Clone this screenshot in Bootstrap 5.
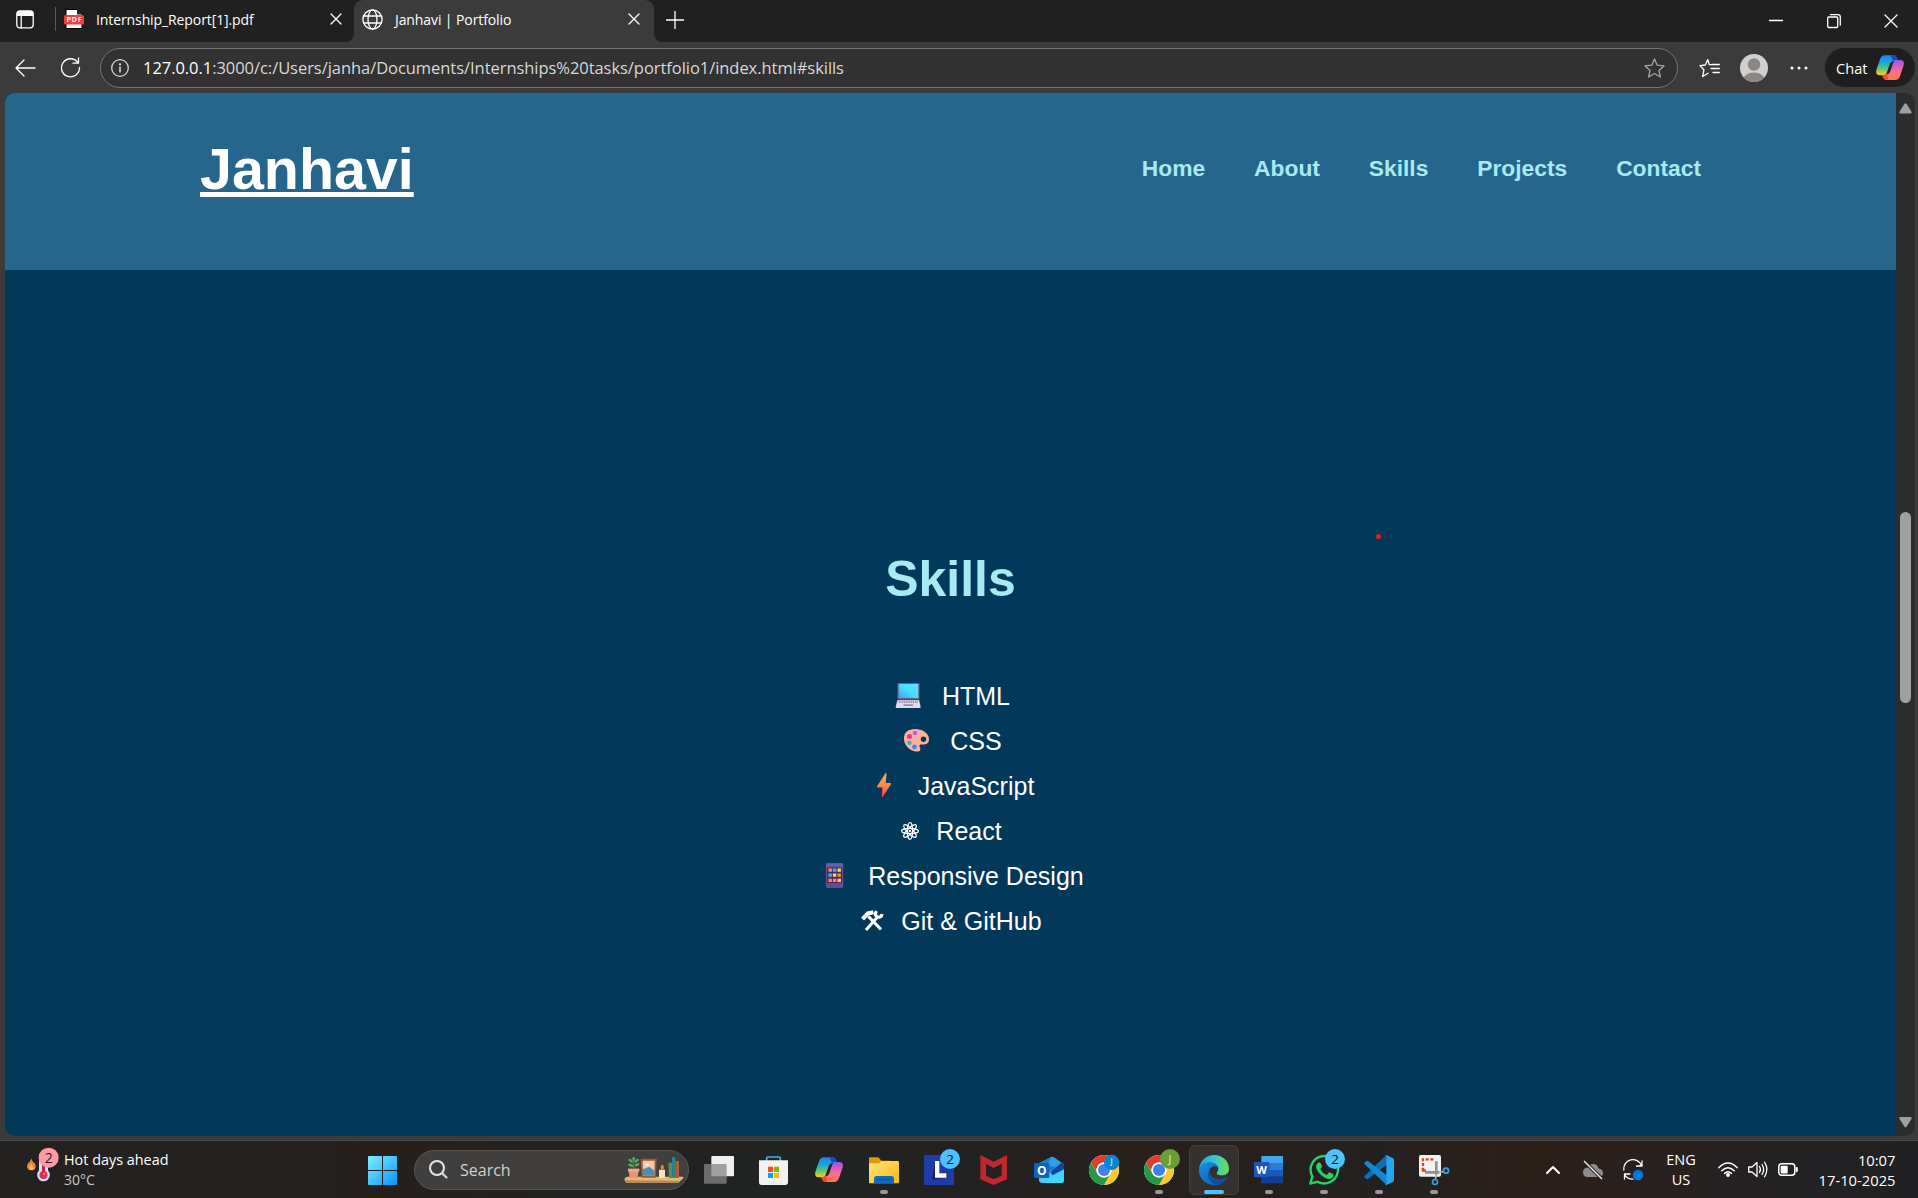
<!DOCTYPE html>
<html lang="en">
<head>
<meta charset="utf-8">
<title>Janhavi | Portfolio</title>
<link href="https://cdn.jsdelivr.net/npm/bootstrap@5.3.0/dist/css/bootstrap.min.css" rel="stylesheet">
<style>
html,body{height:100%;overflow:hidden}
body{background:#3b3b3b;color:#fff;font-family:"Open Sans","Noto Sans",sans-serif;font-size:15px;line-height:20px}
svg{display:block;overflow:visible;flex:none}
.ln{fill:none;stroke:#fff;stroke-width:1.3;stroke-linecap:round;stroke-linejoin:round}
.tabstrip{height:42px;background:#202020}
.tab-title{font-size:14px;white-space:nowrap;padding-top:1px}
.title-gap{margin-left:12px;letter-spacing:-.1px}
.slot-workspace{width:50px;padding-left:16px}
.tab-divider{width:1px;height:24px;background:#5a5a5a;margin-left:5px}
.tab-idle{width:298px;padding:0 12px 0 8px}
.tab-open{width:300px;height:42px;background:#3b3b3b;border-radius:9px 9px 0 0;position:relative;padding:0 14px 0 8px}
.tab-open::before,.tab-open::after{content:"";position:absolute;bottom:0;width:8px;height:8px}
.tab-open::before{left:-8px;background:radial-gradient(circle at 0 0,#202020 7.5px,#3b3b3b 8px)}
.tab-open::after{right:-8px;background:radial-gradient(circle at 100% 0,#202020 7.5px,#3b3b3b 8px)}
.slot-new{width:42px;padding-top:11px}
.slot-win{width:57.5px}
.win-group{margin-right:-2px}
.toolbar-row{height:51px}
.slot-back{width:50px}.slot-reload{width:40px}
.omnibox{width:1578px;height:40px;border:1px solid #757575;border-radius:20px;background:#323232;margin-left:10px;padding:0 12px 0 10px}
.url-text{font-size:16.5px;letter-spacing:-.05px;color:#d8d8d8;white-space:nowrap;margin-left:14px}
.url-text b{font-weight:400;color:#fff}
.tool-group{padding-right:3px}
.fav-ico{margin-right:20px}
.dots-ico{margin:0 17px 0 22px}
.chat-pill{width:90px;height:39px;border-radius:20px;background:#1f1f1f;padding-left:11px;gap:3px}
.chat-label{font-size:14.6px;width:31px}
.viewport-row{height:1043px;padding-left:5px;padding-right:3px}
.site{width:1891px;background:#023859;border-radius:10px 0 0 10px;overflow:hidden;font-family:"Liberation Sans",Arial,sans-serif}
.site-head{height:177px;background:#26658c;padding:0 195px}
.brand-name{font-size:57.4px;line-height:66px;font-weight:700;margin:43px 0 0;text-decoration:underline}
.site-nav{gap:48.9px;margin-top:62px;font-size:22.8px;line-height:26px;font-weight:700}
.site-nav a,.skill-title{color:#a7ebf2;text-decoration:none}
.skill-title{font-size:49.9px;line-height:58px;font-weight:700;margin:280px 0 0}
.skill-list{margin:65px 0 0;font-size:25px}
.skill-list li{height:45px}
.ico-wide{width:51px;padding-left:5px}.ico-atom{width:37px;padding-left:1.5px}.ico-tool{width:42px;padding-left:2px}
.pointer-dot{position:absolute;left:1371.4px;top:441px;width:5px;height:5px;border-radius:50%;background:#ed1c24}
.scroller{width:19px;background:#2c2c2c;border-radius:0 10px 10px 0;padding:10px 0 8px}
.scroll-thumb{width:11px;height:191px;border-radius:6px;background:#9f9f9f;margin-top:398px}
.frame-edge{height:5px;border-bottom:1px solid #4a4a4a}
.taskbar{height:57px;background:linear-gradient(90deg,#232220 0,#242120 16%,#261f1c 20%,#212221 30%,#202423 40%,#232121 52%,#27201d 60%,#232120 72%,#2d201b 80%,#29201e 85%,#222123 94%,#212022 100%)}
.weather{width:354.5px;padding:9px 0 0 64px;position:relative}
.weather svg{position:absolute;left:24px;top:4px}
.weather-main{font-size:14.4px}.weather-sub{font-size:14px;color:#c8c8c8}
.cell{width:55px;height:57px;position:relative}
.cell.run::after{content:"";position:absolute;bottom:4px;left:23.5px;width:8px;height:4px;border-radius:2px;background:#9b9896}
.cell.active::before{content:"";position:absolute;left:2.5px;top:4px;width:50px;height:50px;border-radius:6px;background:#353130;border:1px solid #413d3c}
.cell.active::after{left:17.5px;width:20px;background:#4cc2ff}
.cell svg{position:relative;top:.5px}
.search-pill{width:275px;height:40px;margin:0 2.5px 0 4.5px;padding:0 4px 0 14px;border-radius:20px;background:#403f3e;border:1px solid #565554}
.search-label{font-size:16px;color:#d0d0d0;margin:1px 0 0 12px}
.tray{padding-right:22.5px;font-size:14.5px}
.w40{width:40px}.w30{width:30px}.w-lang{width:56px;margin-right:4px;padding-top:1px}.w-clock{width:92.5px;white-space:nowrap;font-size:14.75px}
.svgt{font-family:"Open Sans","Noto Sans",sans-serif}
</style>
<script src="https://cdn.jsdelivr.net/npm/bootstrap@5.3.0/dist/js/bootstrap.bundle.min.js"></script>
</head>
<body>
<svg width="0" height="0" class="position-absolute" aria-hidden="true">
 <defs>
  <linearGradient id="cpA" x1="0" y1="0" x2="0" y2="1"><stop offset="0" stop-color="#2a7cf0"/><stop offset=".35" stop-color="#18a5dc"/><stop offset=".65" stop-color="#5cc478"/><stop offset="1" stop-color="#ffd014"/></linearGradient>
  <linearGradient id="cpB" x1="0" y1="0" x2="0" y2="1"><stop offset="0" stop-color="#ff7a3c"/><stop offset=".4" stop-color="#ff6e8e"/><stop offset="1" stop-color="#a84df0"/></linearGradient>
  <linearGradient id="winG" x1="0" y1="0" x2="1" y2="1"><stop offset="0" stop-color="#7df0ff"/><stop offset="1" stop-color="#0a94ff"/></linearGradient>
  <linearGradient id="lapG" x1="1" y1="0" x2="0" y2="1"><stop offset="0" stop-color="#5fe4ff"/><stop offset=".5" stop-color="#4bdcff"/><stop offset="1" stop-color="#35a5f2"/></linearGradient>
  <linearGradient id="boltG" x1="0" y1="0" x2="0" y2="1"><stop offset="0" stop-color="#fdb44b"/><stop offset=".5" stop-color="#fb8a44"/><stop offset="1" stop-color="#e8395a"/></linearGradient>
  <linearGradient id="fold" x1="0" y1="0" x2="1" y2="1"><stop offset="0" stop-color="#ffe27a"/><stop offset="1" stop-color="#fdb913"/></linearGradient>
  <linearGradient id="edA" x1="0" y1="0" x2="1" y2="0"><stop offset="0" stop-color="#1fa2e0"/><stop offset=".5" stop-color="#34c8d0"/><stop offset="1" stop-color="#6de04c"/></linearGradient>
  <linearGradient id="edB" x1="0" y1="0" x2="1" y2="1"><stop offset="0" stop-color="#1790e0"/><stop offset="1" stop-color="#0a56b0"/></linearGradient>
  <g id="copilot">
   <path fill="url(#cpB)" transform="rotate(180 60 59)" d="M44 22H70Q78 22 81 31L84 41Q67 34 60 46L51 72Q48 82 40 82H30Q15 82 19 66L30 34Q34 22 44 22Z"/>
   <path fill="url(#cpA)" d="M44 22H70Q78 22 81 31L84 41Q67 34 60 46L51 72Q48 82 40 82H30Q15 82 19 66L30 34Q34 22 44 22Z"/>
   <path fill="#1748c8" d="M60 22H70Q78 22 81 31L84 37Q74 35 68 38Q66 28 60 22Z"/>
   <path fill="#f0493a" d="M36 82H40Q47 81 51 76L54 92L50 96Q42 96 39 88Z"/>
  </g>
  <g id="chrome">
   <circle cx="60" cy="60" r="45" fill="#fff"/>
   <path fill="#e33b2e" d="M21 37.500L41 71.500A22 22 0 0 1 60 37.500H99A45 45 0 0 0 21 37.500Z"/>
   <path fill="#fcc934" d="M99 37.500A45 45 0 0 1 60 105L79.500 71A22 22 0 0 0 60 37.500Z"/>
   <path fill="#279847" d="M60 105A45 45 0 0 1 21 37.500L41 71A22 22 0 0 0 79.500 71Z"/>
   <circle cx="60" cy="60" r="22.500" fill="#fff"/><circle cx="60" cy="60" r="18" fill="#3f7ff0"/>
  </g>
 </defs>
</svg>

<div class="d-flex flex-column vh-100">
 <!-- Tab strip -->
 <div class="tabstrip d-flex align-items-start">
  <div class="d-flex align-items-center h-100 pb-1">
   <div class="slot-workspace"><svg width="18" height="19" viewBox="0 0 18 19"><rect x=".8" y=".8" width="16.400" height="17" rx="3" class="ln"/><path fill="#fff" d="M1 1H17V6H1Z"/><path class="ln" d="M5.200 5V18"/></svg></div>
   <div class="tab-divider"></div>
   <div class="tab-idle d-flex align-items-center">
    <svg width="20" height="20" viewBox="0 0 20 20"><path fill="#fff" stroke="#000" d="M2 .5H13L18 5.500V19.500H2Z"/><path fill="#222" d="M13 .5L18 5.500H13Z"/><rect y="6" width="20" height="9.500" rx="1.500" fill="#f0403c"/><text x="2.400" y="13.400" font-size="7.200" font-weight="700" fill="#fff" textLength="15.200" class="svgt">PDF</text></svg>
    <span class="tab-title title-gap">Internship_Report[1].pdf</span>
    <svg class="ms-auto" width="12" height="12" viewBox="0 0 12 12"><path class="ln" d="M1 1L11 11M11 1L1 11"/></svg>
   </div>
  </div>
  <div class="tab-open d-flex align-items-center pb-1">
   <svg width="21" height="21" viewBox="0 0 21 21"><g class="ln"><circle cx="10.500" cy="10.500" r="9.600"/><ellipse cx="10.500" cy="10.500" rx="4.500" ry="9.600"/><path d="M1.800 7H19.200M1.800 14H19.200"/></g></svg>
   <span class="tab-title title-gap">Janhavi | Portfolio</span>
   <svg class="ms-auto" width="12" height="12" viewBox="0 0 12 12"><path class="ln" d="M1 1L11 11M11 1L1 11"/></svg>
  </div>
  <div class="slot-new d-flex justify-content-center"><svg width="18" height="18" viewBox="0 0 18 18"><path class="ln" d="M9 .5V17.500M.5 9H17.500"/></svg></div>
  <div class="win-group ms-auto d-flex align-items-center h-100">
   <div class="slot-win d-flex justify-content-center"><svg width="14" height="14"><path class="ln" d="M.5 6.500H13.500"/></svg></div>
   <div class="slot-win d-flex justify-content-center"><svg width="14" height="14" viewBox="0 0 14 14"><rect x=".7" y="3" width="10" height="10.500" rx="1" class="ln"/><path class="ln" d="M3.500 .7H11Q13.300 .7 13.300 3V11"/></svg></div>
   <div class="slot-win d-flex justify-content-center"><svg width="14" height="14" viewBox="0 0 14 14"><path class="ln" d="M1 1L13 13M13 1L1 13"/></svg></div>
  </div>
 </div>

 <!-- Address row -->
 <div class="toolbar-row d-flex align-items-center">
  <div class="slot-back d-flex justify-content-center"><svg width="21" height="18" viewBox="0 0 21 18"><path class="ln" d="M20 9H1M9 1L1 9L9 17"/></svg></div>
  <div class="slot-reload d-flex justify-content-center"><svg width="21" height="21" viewBox="0 0 21 21"><path class="ln" d="M17.800 5.500A9 9 0 1 0 19.500 10.500M18.500 1V6.200H13"/></svg></div>
  <div class="omnibox d-flex align-items-center">
   <svg width="18" height="18" viewBox="0 0 18 18"><circle cx="9" cy="9" r="8.300" class="ln" stroke-opacity=".8"/><path class="ln" d="M9 8V13"/><circle cx="9" cy="5.300" r="1" fill="#fff"/></svg>
   <span class="url-text"><b>127.0.0.1</b>:3000/c:/Users/janha/Documents/Internships%20tasks/portfolio1/index.html#skills</span>
   <svg class="ms-auto" width="21" height="20" viewBox="0 0 21 20"><path fill="none" stroke="#a5a5a5" stroke-width="1.300" stroke-linejoin="round" d="M10.500 1L13.200 7.200L20 7.900L14.900 12.400L16.400 19L10.500 15.500L4.600 19L6.100 12.400L1 7.900L7.800 7.200Z"/></svg>
  </div>
  <div class="tool-group d-flex align-items-center ms-auto">
   <svg class="fav-ico" width="21" height="20" viewBox="0 0 21 20"><path class="ln" d="M13.500 6.500L10.300 6.700L8.800 1.500L6.300 7L.8 7.600L4.900 11.800L3.700 18.500L9 15.300M13 6.500H20.300M12 10.500H20.300M14 14.500H20.300"/></svg>
   <svg width="28" height="28" viewBox="0 0 28 28"><clipPath id="av"><circle cx="14" cy="14" r="14"/></clipPath><g clip-path="url(#av)"><path fill="#d2d0ce" d="M0 0H28V28H0Z"/><circle cx="14" cy="10.500" r="6.200" fill="#8a8886"/><ellipse cx="14" cy="26" rx="11" ry="7.500" fill="#8a8886"/></g></svg>
   <svg class="dots-ico" width="18" height="4" viewBox="0 0 18 4"><g fill="#fff"><circle cx="2" cy="2" r="1.500"/><circle cx="9" cy="2" r="1.500"/><circle cx="16" cy="2" r="1.500"/></g></svg>
   <div class="chat-pill d-flex align-items-center"><span class="chat-label">Chat</span><svg width="40" height="40" viewBox="0 0 120 120"><use href="#copilot"/></svg></div>
  </div>
 </div>

 <!-- Page -->
 <div class="viewport-row d-flex">
  <main class="site position-relative">
   <header class="site-head d-flex justify-content-between align-items-start">
    <h1 class="brand-name">Janhavi</h1>
    <nav class="site-nav d-flex"><a href="#home">Home</a><a href="#about">About</a><a href="#skills">Skills</a><a href="#projects">Projects</a><a href="#contact">Contact</a></nav>
   </header>
   <section class="text-center">
    <h2 class="skill-title">Skills</h2>
    <ul class="skill-list list-unstyled">
     <li class="d-flex justify-content-center align-items-center"><span class="ico-wide"><svg width="24" height="25" viewBox="0 0 24 25"><rect x="1.500" width="22" height="16.500" rx="1" fill="#6a5f8c"/><rect x="2.700" y="1" width="19.600" height="14" fill="url(#lapG)"/><path fill="#e3d9e8" d="M1.500 17H23L24.500 23V25H-.2V23Z"/><path stroke="#9d93ab" stroke-width="2.400" stroke-dasharray="1.200 .6" d="M2.500 18.800H22"/><path fill="#968ca5" d="M7.500 21.300H17V23H7.500Z"/></svg></span><span>HTML</span></li>
     <li class="d-flex justify-content-center align-items-center"><span class="ico-wide"><svg width="25" height="23" viewBox="0 0 25 23"><path fill="#ffb1a0" fill-rule="evenodd" d="M11 0C18 0 25 4 25 10C25 15 21 16 17 15.500C15 15.500 15 17 16 18.500C17 21 16 23 12 22.500C5 21.500 0 16 0 9.500C0 3.500 4 0 11 0ZM19.500 7.500A2.700 2.700 0 1 0 19.500 12.900A2.700 2.700 0 1 0 19.500 7.500Z"/><circle cx="5.500" cy="7.500" r="2.500" fill="#f0318c"/><circle cx="11" cy="4" r="2.200" fill="#c05cf0"/><circle cx="5.500" cy="13.800" r="2.200" fill="#32b5b5"/><circle cx="10.500" cy="18" r="2.400" fill="#4a86e8"/></svg></span><span>CSS</span></li>
     <li class="d-flex justify-content-center align-items-center"><span class="ico-wide"><svg width="24" height="25" viewBox="0 0 24 25"><path fill="url(#boltG)" d="M13.500 .3Q14.500 -.3 14.500 1L13.800 10H18.500Q19.500 10.200 18.800 11.500L10.800 24Q9.800 25 10 23.500L10.300 14.500H5.800Q4.500 14.200 5.200 13Z"/></svg></span><span>JavaScript</span></li>
     <li class="d-flex justify-content-center align-items-center"><span class="ico-atom"><svg width="18" height="18" viewBox="-9 -9 18 18"><g fill="none" stroke="#fff" stroke-width="1.200"><ellipse rx="8.500" ry="2.700"/><ellipse rx="8.500" ry="2.700" transform="rotate(45)"/><ellipse rx="8.500" ry="2.700" transform="rotate(90)"/><ellipse rx="8.500" ry="2.700" transform="rotate(135)"/></g><circle r="1.300" fill="#fff"/></svg></span><span>React</span></li>
     <li class="d-flex justify-content-center align-items-center"><span class="ico-wide"><svg width="24" height="25" viewBox="0 0 24 25"><rect x="3.800" width="17.500" height="25" rx="1.500" fill="#6a4a8e"/><rect x="5" y="4.500" width="15" height="15.500" fill="#4a2d66"/><path fill="#5b63b7" d="M4.500 .5H20.500V3.500H4.500Z"/><g transform="translate(.5 0)"><g fill="#ff8a3d"><path d="M6 5.500h3.400v3.200H6zM6 15.700h3.400v3.200H6zM10.400 15.700h3.400v3.200h-3.400zM15 10.600h3.400v3.200H15z"/></g><g fill="#3fb0f5"><path d="M10.400 5.500h3.400v3.200h-3.400zM6 10.600h3.400v3.200H6z"/></g><g fill="#ffd94d"><path d="M15 5.500h3.400v3.200H15zM10.400 10.600h3.400v3.200h-3.400zM15 15.700h3.400v3.200H15z"/></g></g></svg></span><span>Responsive Design</span></li>
     <li class="d-flex justify-content-center align-items-center"><span class="ico-tool"><svg width="22" height="21" viewBox="0 0 22 21"><g fill="none" stroke="#fff"><path stroke-width="3.200" d="M7.500 6.500L20 19.500"/><path stroke-width="3" d="M5 20L16.500 7"/><path stroke-width="4.200" d="M1.500 9L7 3.500L12.500 2.200"/><path stroke-width="3.200" d="M15.500 1Q13 5.500 16.500 7Q20.500 8 21 4"/></g></svg></span><span>Git &amp; GitHub</span></li>
    </ul>
   </section>
   <span class="pointer-dot"></span>
  </main>
  <div class="scroller d-flex flex-column align-items-center">
   <svg width="13" height="11" viewBox="0 0 13 11"><path fill="#9f9f9f" d="M5.500 .8Q6.500 -.3 7.500 .8L12.700 9Q13 10.500 11.500 10.500H1.500Q0 10.500 .3 9Z"/></svg>
   <div class="scroll-thumb"></div>
   <svg class="mt-auto" width="13" height="11" viewBox="0 0 13 11"><path fill="#9f9f9f" d="M5.500 9.700Q6.500 10.800 7.500 9.700L12.700 1.500Q13 0 11.500 0H1.500Q0 0 .3 1.500Z"/></svg>
  </div>
 </div>
 <div class="frame-edge"></div>

 <!-- Taskbar -->
 <div class="taskbar d-flex align-items-center">
  <div class="weather h-100">
   <svg width="36" height="40" viewBox="0 0 108 120"><path fill="#fb7a35" d="M22 40Q24 50 29 52Q34 56 35 62Q36 76 22 76Q9 76 9 62Q10 54 17 50Q21 46 22 40Z"/><path fill="#ffc34d" d="M22 56Q30 64 29 70Q27 75 22 75Q16 74 16 68Q17 62 22 56Z"/><rect x="45" y="20" width="27" height="78" rx="13" fill="#c9e4f8"/><circle cx="58.500" cy="90" r="19" fill="#c9e4f8"/><path stroke="#c8234a" stroke-width="9" d="M58.500 40V90"/><circle cx="58.500" cy="90" r="12" fill="#e02c50"/><circle cx="61" cy="87" r="3" fill="#ff8b9b"/><circle cx="74" cy="38" r="30" fill="#ff99a4"/><text x="74" y="53" font-size="42" fill="#222" text-anchor="middle" class="svgt">2</text></svg>
   <div class="weather-main">Hot days ahead</div><div class="weather-sub">30°C</div>
  </div>
  <div class="cell d-flex align-items-center justify-content-center"><svg width="29" height="29" viewBox="0 0 29 29"><path fill="url(#winG)" d="M1 0H14V14H0V1Q0 0 1 0ZM15 0H28Q29 0 29 1V14H15ZM0 15H14V29H1Q0 29 0 28ZM15 15H29V28Q29 29 28 29H15Z"/></svg></div>
  <div class="search-pill d-flex align-items-center">
   <svg width="19" height="19" viewBox="0 0 19 19"><circle cx="8" cy="8" r="7" fill="none" stroke="#e3e8ee" stroke-width="2"/><path stroke="#d5dae0" stroke-width="2.200" stroke-linecap="round" d="M13 13L17.500 17.500"/></svg>
   <span class="search-label">Search</span>
   <svg class="ms-auto" width="60" height="28" viewBox="820 82 180 84"><path fill="#e3b878" d="M822 148L830 144H996L999 147L986 160Q984 162 980 162H828Q822 160 822 155Z"/><path fill="#b98850" d="M822 155L988 156L984 162H828Q822 160 822 155Z"/><path fill="#e8937a" d="M833 122H865L861 148H837Z"/><path fill="#f5ab93" d="M832 120H866V128H832Z"/><path stroke="#3a9a48" stroke-width="3" d="M849 122V92"/><g fill="#48b055"><ellipse cx="840" cy="96" rx="8" ry="4" transform="rotate(35 840 96)"/><ellipse cx="858" cy="96" rx="8" ry="4" transform="rotate(-35 858 96)"/><ellipse cx="840" cy="110" rx="8" ry="4" transform="rotate(25 840 110)"/><ellipse cx="859" cy="108" rx="8" ry="4" transform="rotate(-25 859 108)"/><ellipse cx="849" cy="90" rx="4" ry="6"/></g><path fill="#9c5a30" d="M870 90H918L916 147H872Z"/><path fill="#f2c8a8" d="M876 96H912L911 141H877Z"/><path fill="#4f8db5" d="M877 122L896 114L911 126V141H877Z"/><circle cx="890" cy="108" r="5" fill="#fff0d8"/><rect x="925" y="123" width="18" height="25" fill="#f5e3c0"/><path fill="#ff8a28" d="M935 107Q943 118 937 122H932Q927 117 935 107Z"/><path fill="#5e8a4c" d="M953 102H964V148H955Z"/><path fill="#1f8a94" d="M964 86H974V148H965Z"/><path fill="#b55b35" d="M974 97H985V148H974Z"/></svg>
  </div>
  <div class="cell d-flex align-items-center justify-content-center"><svg width="40" height="40" viewBox="0 0 120 120"><rect x="37" y="18" width="68" height="61" rx="3" fill="#f0f0f0"/><rect x="15" y="42" width="68" height="59" rx="3" fill="#858585" fill-opacity=".75"/></svg></div>
  <div class="cell d-flex align-items-center justify-content-center"><svg width="40" height="40" viewBox="0 0 120 120"><path fill="none" stroke="#35b8ee" stroke-width="5" d="M38 34V24Q38 21 41 21H76Q79 21 79 24V34"/><path fill="#f2f2f2" d="M15 31H102V97Q102 105 94 105H23Q15 105 15 97Z"/><path fill="#f25022" d="M42 50H57V66H42Z"/><path fill="#7fba00" d="M60 50H75V66H60Z"/><path fill="#00a4ef" d="M42 69H57V84H42Z"/><path fill="#ffb900" d="M60 69H75V84H60Z"/></svg></div>
  <div class="cell d-flex align-items-center justify-content-center"><svg width="40" height="40" viewBox="0 0 120 120"><use href="#copilot"/></svg></div>
  <div class="cell run d-flex align-items-center justify-content-center"><svg width="40" height="40" viewBox="0 0 120 120"><path fill="#dd9b06" d="M15 25Q15 22 19 22H40Q44 22 47 26L52 32H80V50H15Z"/><path fill="url(#fold)" d="M15 40H42Q46 40 49 36L52 33H101Q105 33 105 37V96Q105 100 101 100H15Z"/><path fill="#0f6cbd" d="M30 100V86Q30 78 38 78H82Q90 78 90 86V100Z"/><path stroke="#0a4f94" stroke-width="3" d="M40 89H80"/></svg></div>
  <div class="cell d-flex align-items-center justify-content-center"><svg width="40" height="40" viewBox="0 0 120 120"><path fill="#1f3ba8" d="M15 15H105V105H15Z"/><path fill="#132352" d="M48 33L40 89L82 83V70H60Z"/><path fill="#fff" d="M48 33H61V70H82V83H48Z"/><circle cx="93" cy="27" r="30" fill="#4cc2ff"/><text x="93" y="41" font-size="40" fill="#111" text-anchor="middle" class="svgt">2</text></svg></div>
  <div class="cell d-flex align-items-center justify-content-center"><svg width="40" height="40" viewBox="0 0 120 120"><path fill="#c1272d" d="M19 15L59 35L99 15V88L59 105L19 88ZM36 41V77L59 88L83 77V41L59 54Z" fill-rule="evenodd"/></svg></div>
  <div class="cell d-flex align-items-center justify-content-center"><svg width="40" height="40" viewBox="0 0 120 120"><path fill="#2f9fe8" d="M30 40L66 21Q72 19 78 24L104 42L60 72Z"/><path fill="#52c8f2" d="M30 45V92Q32 99 40 99H96Q105 98 105 89V42L60 68Z"/><path fill="#0a4a9c" d="M64 66L100 36L105 44V58L70 76Z"/><path fill="#1a78cf" d="M36 37L66 21Q60 40 50 46L84 52L56 66Z"/><path fill="#3fd6f7" d="M48 95L105 60V89Q104 99 96 99H44Z"/><rect x="15" y="39" width="46" height="45" rx="4" fill="#0c64c0"/><text x="38" y="74" font-size="36" font-weight="700" fill="#fff" text-anchor="middle" class="svgt">O</text></svg></div>
  <div class="cell d-flex align-items-center justify-content-center"><svg width="40" height="40" viewBox="0 0 120 120"><use href="#chrome"/><circle cx="83" cy="37" r="23" fill="#0288d1"/><text x="83" y="46" font-size="25" fill="#fff" text-anchor="middle" class="svgt">J</text></svg></div>
  <div class="cell run d-flex align-items-center justify-content-center"><svg width="40" height="40" viewBox="0 0 120 120"><use href="#chrome"/><circle cx="93" cy="27" r="30" fill="#689f38"/><text x="93" y="38" font-size="32" fill="#e8f0dc" text-anchor="middle" class="svgt">J</text></svg></div>
  <div class="cell run active d-flex align-items-center justify-content-center"><svg width="40" height="40" viewBox="0 0 120 120"><path fill="url(#edA)" d="M15 58C18 30 38 15 60 15C86 15 105 34 105 56C105 70 95 76 84 76C74 76 68 73 68 69C68 66 73 64 73 56C73 44 60 38 48 38C32 38 20 46 15 58Z"/><path fill="url(#edB)" d="M15 60C18 45 30 37 46 37C60 37 72 44 72 55C70 48 58 46 50 54C42 62 46 84 68 88C80 90 90 85 96 82Q100 82 98 86C90 98 76 105 60 105C34 105 14 84 15 60Z"/><path fill="#0d4f9e" d="M50 54C40 66 46 84 62 88C78 91 90 85 96 82Q100 82 98 86C91 96 82 102 68 104C46 100 34 74 50 54Z"/></svg></div>
  <div class="cell run d-flex align-items-center justify-content-center"><svg width="40" height="40" viewBox="0 0 120 120"><path fill="#41a5ee" d="M37 18H102V39H37Z"/><path fill="#2b7cd3" d="M37 39H102V60H37Z"/><path fill="#185abd" d="M37 60H102V80H37Z"/><path fill="#103f91" d="M37 80H102V100H37Z"/><rect x="15" y="36" width="46" height="46" rx="3" fill="#1c56b8"/><text x="38" y="71" font-size="33" font-weight="700" fill="#fff" text-anchor="middle" class="svgt">W</text></svg></div>
  <div class="cell run d-flex align-items-center justify-content-center"><svg width="40" height="40" viewBox="0 0 120 120"><path fill="none" stroke="#25d366" stroke-width="7" stroke-linejoin="round" d="M19 101L25 79A41 41 0 1 1 41 95Z"/><path fill="#25d366" d="M42 38Q47 36 50 40L54 49Q54 52 49 57Q55 70 68 75L74 68Q76 66 79 68L88 73Q90 75 87 81Q82 88 73 87Q58 84 46 70Q34 56 37 45Q39 40 42 38Z"/><circle cx="93" cy="27" r="30" fill="#4cc2ff"/><text x="93" y="41" font-size="40" fill="#111" text-anchor="middle" class="svgt">2</text></svg></div>
  <div class="cell run d-flex align-items-center justify-content-center"><svg width="40" height="40" viewBox="0 0 120 120"><path fill="#0a6fb8" d="M17 77L80 17L86 42L27 87Q24 89 21 86L16 81Q15 79 17 77Z"/><path fill="#1486d2" d="M17 43L80 103L86 78L27 33Q24 31 21 34L16 39Q15 41 17 43Z"/><path fill="#24a5f0" d="M78 16Q81 14 84 16L101 24Q105 26 105 30V90Q105 94 101 96L84 104Q81 106 78 103Q82 103 82 98V22Q82 17 78 16Z"/></svg></div>
  <div class="cell run d-flex align-items-center justify-content-center"><svg width="40" height="40" viewBox="0 0 120 120"><rect x="15" y="15" width="66" height="65" rx="5" fill="#f2f2f2"/><path fill="none" stroke="#d8431a" stroke-width="7" stroke-dasharray="9 5" d="M27 62V28H63"/><path fill="none" stroke="#d8431a" stroke-width="7" d="M27 54V62H36"/><path stroke="#8d9299" stroke-width="8" d="M67 34V74M33 67H76"/><path stroke="#b0b4ba" stroke-width="5" d="M67 74L64 88M76 67L90 64"/><g fill="none" stroke="#2fa3e6" stroke-width="5"><circle cx="63" cy="96" r="7.500"/><circle cx="96" cy="62" r="7.500"/></g></svg></div>

  <div class="tray d-flex align-items-center ms-auto">
   <div class="w40 d-flex justify-content-center"><svg width="14" height="8" viewBox="0 0 14 8"><path fill="none" stroke="#fff" stroke-width="2" stroke-linecap="round" stroke-linejoin="round" d="M1 7L7 1L13 7"/></svg></div>
   <div class="w40 d-flex justify-content-center"><svg width="20" height="18" viewBox="0 0 20 18"><path fill="#8f8c8b" d="M5 16Q0 16 0 11.500Q0 7 4.500 6.800Q6 3 10 3Q14.500 3 15.500 7.500Q20 8 20 12Q20 16 15.500 16Z"/><path stroke="#2a211f" stroke-width="3.400" d="M1 0L19 18"/><path stroke="#eee" stroke-width="1.400" d="M1 0L19 18"/></svg></div>
   <div class="w40 d-flex justify-content-center"><svg width="20" height="20" viewBox="0 0 20 20"><path class="ln" d="M.8 10A9.200 9.200 0 0 1 18.500 5.500M19 .8V6H13.500M1.500 19V14H7M1.500 14.500Q4 19 10 19.200"/><circle cx="15" cy="15" r="5.300" fill="#0078d7"/></svg></div>
   <div class="w-lang text-center">ENG<br>US</div>
   <div class="w30 d-flex justify-content-center"><svg width="20" height="15" viewBox="0 0 20 15"><path fill="none" stroke="#fff" stroke-width="1.500" stroke-linecap="round" d="M.8 5.800Q10 -3.600 19.200 5.800M3.800 8.800Q10 2.500 16.200 8.800M6.600 11.500Q10 8 13.400 11.500"/><circle cx="10" cy="13" r="1.900" fill="#fff"/></svg></div>
   <div class="w30 d-flex justify-content-center"><svg width="20" height="17" viewBox="0 0 20 17"><path class="ln" d="M.7 6H4L9 1.500V15.500L4 11H.7ZM11.500 5.500Q13.500 8.500 11.500 11.500M14 3.500Q17.300 8.500 14 13.500M16.500 1.200Q21.300 8.500 16.500 15.800"/></svg></div>
   <div class="w30 d-flex justify-content-center"><svg width="20" height="13" viewBox="0 0 20 13"><rect x=".8" y=".8" width="16" height="11.500" rx="3" fill="none" stroke="#fff" stroke-width="1.500"/><rect x="2.700" y="2.700" width="7" height="7.700" rx="1" fill="#fff"/><path stroke="#fff" stroke-width="2" stroke-linecap="round" d="M18.800 5V8"/></svg></div>
   <div class="w-clock text-end">10:07<br>17-10-2025</div>
  </div>
 </div>
</div>
</body>
</html>
